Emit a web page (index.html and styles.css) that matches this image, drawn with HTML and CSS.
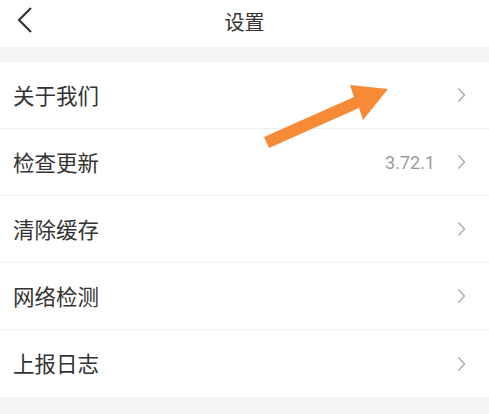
FILE: index.html
```html
<!DOCTYPE html>
<html lang="zh-CN">
<head>
    <meta charset="UTF-8">
    <meta name="viewport" content="width=device-width, initial-scale=1.0">
    <title>设置</title>
    <link rel="stylesheet" href="styles.css">
</head>
<body>
    <!-- Barra superior -->
    <div class="topbar">
        <svg class="back" viewBox="0 0 16 26" width="16" height="26">
            <path d="M14 1 L2 13 L14 25" fill="none" stroke="#333" stroke-width="2.2"/>
        </svg>
        <div class="title">设置</div>
    </div>

    <!-- Lista -->
    <div class="list">
        <div class="row">
            <span class="label">关于我们</span>
            <svg class="chev" viewBox="0 0 9 16" width="9" height="16"><path d="M1.5 1.5 L7.5 8 L1.5 14.5" fill="none" stroke="#aaa" stroke-width="1.4"/></svg>
        </div>
        <div class="row">
            <span class="label">检查更新</span>
            <span class="value">3.72.1</span>
            <svg class="chev" viewBox="0 0 9 16" width="9" height="16"><path d="M1.5 1.5 L7.5 8 L1.5 14.5" fill="none" stroke="#aaa" stroke-width="1.4"/></svg>
        </div>
        <div class="row">
            <span class="label">清除缓存</span>
            <svg class="chev" viewBox="0 0 9 16" width="9" height="16"><path d="M1.5 1.5 L7.5 8 L1.5 14.5" fill="none" stroke="#aaa" stroke-width="1.4"/></svg>
        </div>
        <div class="row">
            <span class="label">网络检测</span>
            <svg class="chev" viewBox="0 0 9 16" width="9" height="16"><path d="M1.5 1.5 L7.5 8 L1.5 14.5" fill="none" stroke="#aaa" stroke-width="1.4"/></svg>
        </div>
        <div class="row">
            <span class="label">上报日志</span>
            <svg class="chev" viewBox="0 0 9 16" width="9" height="16"><path d="M1.5 1.5 L7.5 8 L1.5 14.5" fill="none" stroke="#aaa" stroke-width="1.4"/></svg>
        </div>
    </div>

    <!-- Flecha naranja -->
    <svg class="arrow" viewBox="0 0 489 414" width="489" height="414">
        <polygon fill="#f68a36" points="264,137 354,97 350,85 388,89 363,120 359,108 269,148"/>
    </svg>
</body>
</html>
```

FILE: styles.css
```css
body {
    margin: 0;
    padding: 0;
    background: #f4f4f4;
    font-family: "Noto Sans CJK SC", "Noto Sans", sans-serif;
    color: #333;
    position: relative;
    height: 414px;
    overflow: hidden;
}

.topbar {
    height: 47px;
    background: #fff;
    display: flex;
    align-items: center;
    justify-content: center;
    position: relative;
}

.back {
    position: absolute;
    left: 17px;
    top: 7px;
}

.title {
    font-size: 20px;
    color: #333;
    margin-top: -4px;
}

.list {
    margin-top: 15px;
    background: #fff;
}

.row {
    height: 66px;
    display: flex;
    align-items: center;
    padding: 0 23px 0 13px;
    border-bottom: 1px solid #efefef;
}

.row:last-child {
    height: 67px;
    border-bottom: none;
}

.label {
    font-size: 21.5px;
    flex: 1;
    margin-top: -2px;
}

.value {
    font-family: "Roboto", "Noto Sans", sans-serif;
    font-size: 18px;
    color: #9a9a9a;
    margin-right: 22px;
}

.chev {
    display: block;
}

.arrow {
    position: absolute;
    left: 0;
    top: 0;
}
```
